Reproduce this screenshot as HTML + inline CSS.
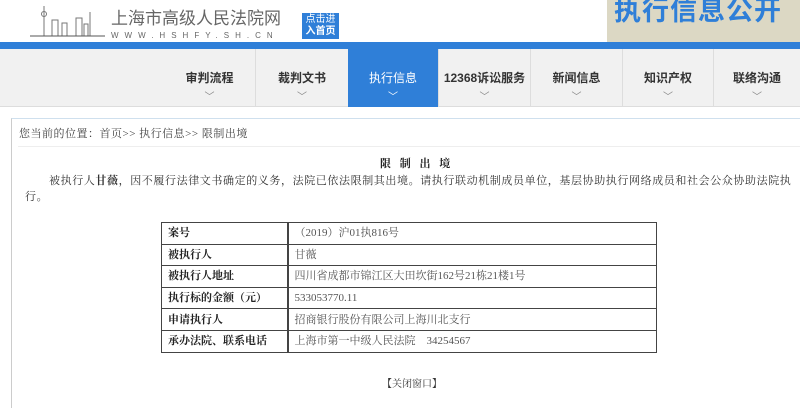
<!DOCTYPE html>
<html><head><meta charset="utf-8"><style>
*{margin:0;padding:0;box-sizing:border-box}
body{width:800px;height:402px;overflow:hidden;background:#fff;font-family:"Liberation Serif","Noto Serif CJK SC",serif;position:relative;color:#222}
.abs{position:absolute}
.sans{font-family:"Liberation Sans","Noto Sans CJK SC",sans-serif}
.nav div{position:absolute;top:49px;height:58px;text-align:center;font-size:12px;font-weight:bold;color:#333;padding-top:20px;font-family:"Liberation Sans","Noto Sans CJK SC",sans-serif;border-left:1px solid #ddd}
.nav div span{display:block;font-weight:normal;color:#888;font-size:10px;margin-top:2px}
table{border-collapse:collapse;position:absolute;left:161px;top:222px;width:496px;font-size:11px}
td{border:1px solid #444;height:21.6px;padding:0 6px;line-height:20px}
td:first-child{width:126px;font-weight:bold;color:#222;border-right:2px solid #444}
td:last-child{color:#555}
</style></head><body>
<div class="abs" style="left:30px;top:4px;width:70px;height:32px">
<svg width="75" height="34"><g stroke="#777" fill="none"><line x1="14" y1="2" x2="14" y2="32"/><circle cx="14" cy="10" r="2.5"/><line x1="60" y1="8" x2="60" y2="32"/><rect x="22" y="16" width="6" height="16"/><rect x="32" y="19" width="5" height="13"/><rect x="46" y="14" width="6" height="18"/><rect x="54" y="20" width="4" height="12"/></g><line x1="0" y1="32" x2="75" y2="32" stroke="#555"/></svg></div>
<div class="abs sans" style="left:111px;top:9px;font-size:17px;line-height:20px;color:#666">上海市高级人民法院网</div>
<div class="abs sans" style="left:111px;top:31px;font-size:8px;line-height:9px;color:#666;letter-spacing:6px">WWW.HSHFY.SH.CN</div>
<div class="abs sans" style="left:302px;top:13px;width:37px;height:26px;background:#2f7fd8;color:#fff;font-size:10px;line-height:12px;text-align:center;padding-top:1px">点击进<br><b>入首页</b></div>
<div class="abs sans" style="left:607px;top:0;width:193px;height:43px;background:#dcd8c4;color:#2f7fd8;font-size:27px;font-weight:bold;padding-left:7px;line-height:22px;letter-spacing:1px">执行信息公开</div>
<div class="abs" style="left:0;top:42px;width:800px;height:7px;background:#2f7fd8"></div>
<div class="abs" style="left:0;top:49px;width:800px;height:58px;background:#f1f1f1;border-bottom:1px solid #ddd"></div>
<div class="nav">
<div style="left:164px;width:91px;border-left:none">审判流程<span>﹀</span></div>
<div style="left:255px;width:93px">裁判文书<span>﹀</span></div>
<div style="left:348px;width:90px;background:#2f7fd8;color:#fff;font-weight:normal;border:none">执行信息<span style="color:#fff">﹀</span></div>
<div style="left:438px;width:92px">12368诉讼服务<span>﹀</span></div>
<div style="left:530px;width:92px">新闻信息<span>﹀</span></div>
<div style="left:622px;width:91px">知识产权<span>﹀</span></div>
<div style="left:713px;width:87px">联络沟通<span>﹀</span></div>
</div>
<div class="abs" style="left:11px;top:118px;width:800px;height:290px;border-left:1px solid #ccc;border-top:1px solid #cfe0ee"></div>
<div class="abs" style="left:19px;top:125px;font-size:11px;color:#444;letter-spacing:0.5px">您当前的位置：首页&gt;&gt; 执行信息&gt;&gt; 限制出境</div>
<div class="abs" style="left:18px;top:146px;width:782px;height:1px;background:#eee"></div>
<div class="abs" style="left:380px;top:155px;font-size:11px;font-weight:bold;letter-spacing:3px">限 制 出 境</div>
<div class="abs" style="left:25px;top:173px;width:800px;font-size:11px;line-height:16px;color:#333;text-indent:24px;letter-spacing:0.6px;white-space:nowrap">被执行人<b>甘薇</b>，因不履行法律文书确定的义务，法院已依法限制其出境。请执行联动机制成员单位，基层协助执行网络成员和社会公众协助法院执<br>行。</div>
<table>
<tr><td>案号</td><td>（2019）沪01执816号</td></tr>
<tr><td>被执行人</td><td>甘薇</td></tr>
<tr><td>被执行人地址</td><td>四川省成都市锦江区大田坎街162号21栋21楼1号</td></tr>
<tr><td>执行标的金额（元）</td><td>533053770.11</td></tr>
<tr><td>申请执行人</td><td>招商银行股份有限公司上海川北支行</td></tr>
<tr><td>承办法院、联系电话</td><td>上海市第一中级人民法院　34254567</td></tr>
</table>
<div class="abs" style="left:382px;top:375px;font-size:10px;color:#333">【关闭窗口】</div>
</body></html>
